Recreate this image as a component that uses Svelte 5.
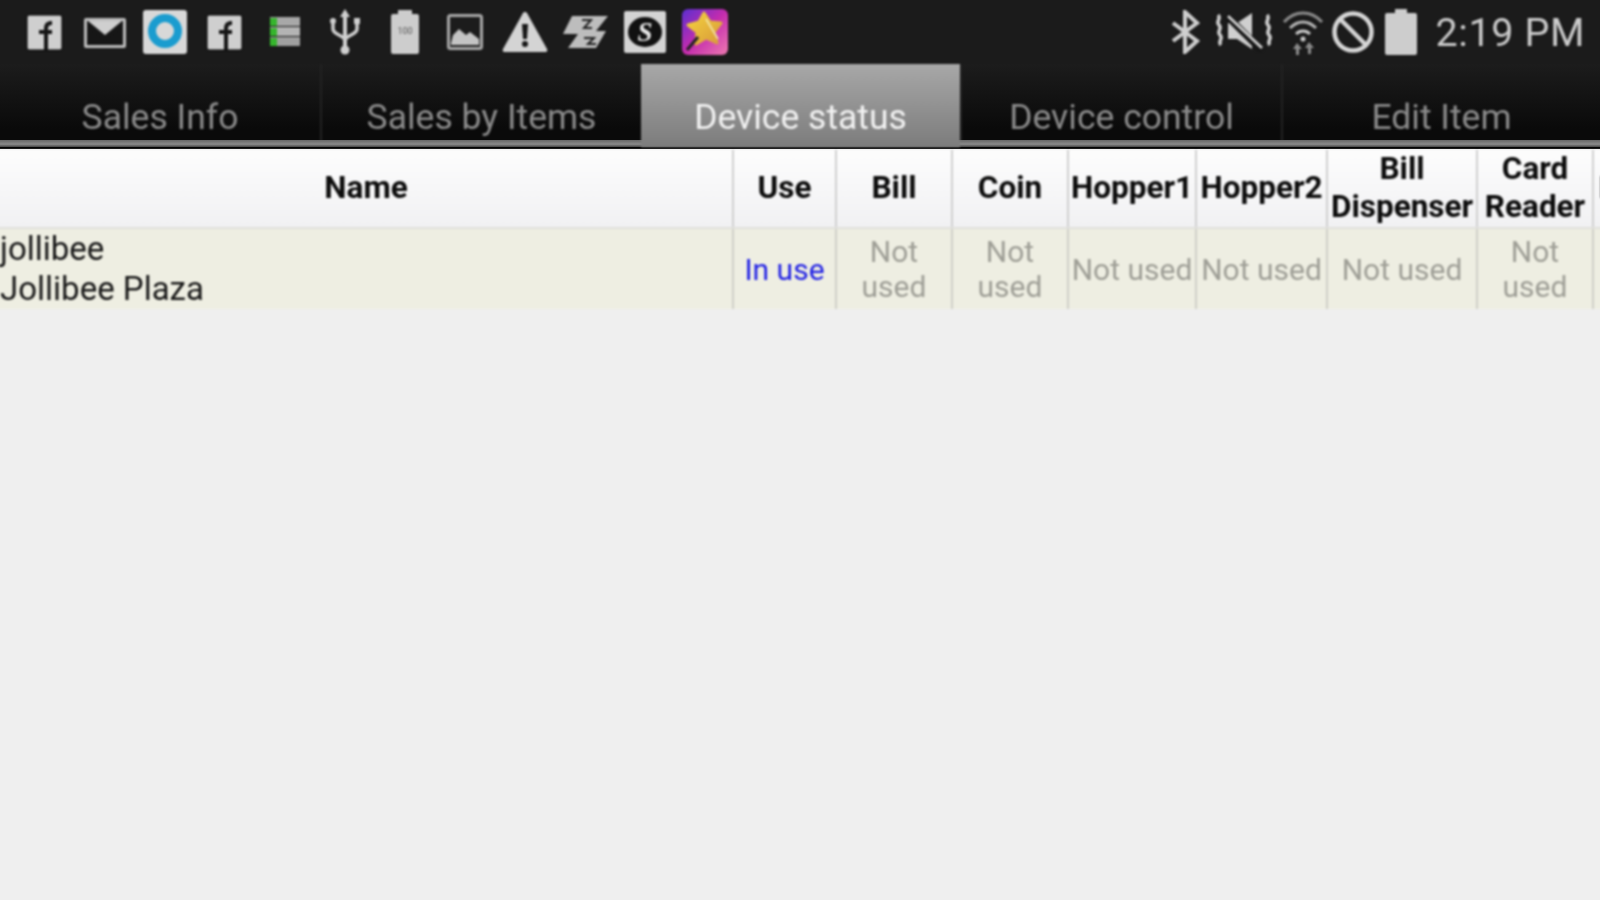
<script>
    const tabs = ["Sales Info", "Sales by Items", "Device status", "Device control", "Edit Item"];
    const active = 2;

    const columns = [
        { label: ["Name"], width: 737 },
        { label: ["Use"], width: 103 },
        { label: ["Bill"], width: 116 },
        { label: ["Coin"], width: 116 },
        { label: ["Hopper1"], width: 128 },
        { label: ["Hopper2"], width: 131 },
        { label: ["Bill", "Dispenser"], width: 150 },
        { label: ["Card", "Reader"], width: 116 },
        { label: ["Error"], width: 80 },
    ];

    const cells = [
        { lines: ["Not", "used"] },
        { lines: ["Not", "used"] },
        { lines: ["Not used"] },
        { lines: ["Not used"] },
        { lines: ["Not used"] },
        { lines: ["Not", "used"] },
    ];
</script>

<div class="screen">
    <header class="status">
        <div class="icons">
            <span class="slot">
                <svg width="40" height="40" viewBox="0 0 40 40">
                    <rect x="2" y="3" width="35" height="35" rx="2" fill="#cfcfcf" stroke="#000" stroke-width="1" />
                    <path d="M19 38V17c0-6 3-8 8-8v4c-3 0-4 1-4 5h4v4h-4v16z" fill="#161616" />
                    <path d="M14 18h13v4H14z" fill="#161616" />
                </svg>
            </span>
            <span class="slot">
                <svg width="44" height="40" viewBox="0 0 44 40">
                    <rect x="1" y="6" width="42" height="30" rx="2" fill="#bcbcbc" />
                    <path d="M4 9h36v24H4z" fill="#161616" />
                    <path d="M5 9h34L22 23z" fill="#cfcfcf" />
                    <path d="M8 29V19l14 10 14-10v10z" fill="#161616" />
                </svg>
            </span>
            <span class="slot">
                <svg width="46" height="46" viewBox="0 0 46 46">
                    <rect x="1" y="1" width="44" height="44" rx="3" fill="#d8d8d8" />
                    <circle cx="23" cy="22" r="13" fill="none" stroke="#1a9ccf" stroke-width="8" />
                </svg>
            </span>
            <span class="slot">
                <svg width="40" height="40" viewBox="0 0 40 40">
                    <rect x="2" y="3" width="35" height="35" rx="2" fill="#cfcfcf" stroke="#000" stroke-width="1" />
                    <path d="M19 38V17c0-6 3-8 8-8v4c-3 0-4 1-4 5h4v4h-4v16z" fill="#161616" />
                    <path d="M14 18h13v4H14z" fill="#161616" />
                </svg>
            </span>
            <span class="slot">
                <svg width="32" height="32" viewBox="0 0 32 32">
                    <rect x="1" y="1" width="30" height="9" fill="#a8a8a8" />
                    <rect x="1" y="11" width="30" height="9" fill="#b4b4b4" />
                    <rect x="1" y="21" width="30" height="9" fill="#a0a0a0" />
                    <rect x="1" y="2" width="7" height="8" fill="#35b52c" />
                    <rect x="1" y="12" width="7" height="8" fill="#35b52c" />
                    <rect x="1" y="22" width="7" height="8" fill="#35b52c" />
                </svg>
            </span>
            <span class="slot">
                <svg width="32" height="48" viewBox="0 0 32 48" fill="none" stroke="#d0d0d0">
                    <path d="M16 4v36" stroke-width="4" />
                    <path d="M16 1l5 8H11z" fill="#d0d0d0" stroke="none" />
                    <path d="M4 14v7c0 6 12 6 12 12" stroke-width="3.5" />
                    <path d="M28 14v7c0 6-12 6-12 12" stroke-width="3.5" />
                    <circle cx="4" cy="13" r="3" fill="#d0d0d0" stroke="none" />
                    <rect x="25" y="10" width="6" height="6" fill="#d0d0d0" stroke="none" />
                    <circle cx="16" cy="42" r="4.5" fill="#d0d0d0" stroke="none" />
                </svg>
            </span>
            <span class="slot">
                <svg width="32" height="46" viewBox="0 0 32 46">
                    <path d="M9 1h14v4h5a2 2 0 0 1 2 2v36a2 2 0 0 1-2 2H4a2 2 0 0 1-2-2V7a2 2 0 0 1 2-2h5z" fill="#cdcdcd" />
                    <text x="16" y="25" class="tiny">100</text>
                </svg>
            </span>
            <span class="slot">
                <svg width="36" height="38" viewBox="0 0 36 38">
                    <rect x="1.5" y="2.5" width="33" height="33" rx="2" fill="#1c1c1c" stroke="#a8a8a8" stroke-width="3" />
                    <path d="M4 30l2-8 6-6 7 6 4-3 9 7v6H4z" fill="#c4c4c4" />
                </svg>
            </span>
            <span class="slot">
                <svg width="46" height="42" viewBox="0 0 46 42">
                    <path d="M23 1a2 2 0 0 1 2 1l20 36a2 2 0 0 1-2 3H3a2 2 0 0 1-2-3L21 2a2 2 0 0 1 2-1z" fill="#d4d4d4" />
                    <path d="M20 13h6l-1 15h-4z" fill="#161616" />
                    <circle cx="23" cy="33" r="3" fill="#161616" />
                </svg>
            </span>
            <span class="slot">
                <svg width="46" height="36" viewBox="0 0 46 36">
                    <path d="M10 2h36l-12 15h10L34 34H6l10-14H1z" fill="#bdbdbd" />
                    <path d="M20 6h9l-7 8h8" fill="none" stroke="#222" stroke-width="2" />
                    <path d="M22 24h10l-6 6h8" fill="none" stroke="#222" stroke-width="2" />
                </svg>
            </span>
            <span class="slot">
                <svg width="44" height="44" viewBox="0 0 44 44">
                    <rect x="1" y="1" width="42" height="42" rx="2" fill="#d4d4d4" />
                    <ellipse cx="22" cy="22" rx="17" ry="15" fill="#111" />
                    <text x="22" y="31" class="badge-s">S</text>
                </svg>
            </span>
            <span class="slot">
                <svg width="46" height="46" viewBox="0 0 46 46">
                    <defs>
                        <linearGradient id="wand-bg" x1="0" y1="0" x2="1" y2="1">
                            <stop offset="0" stop-color="#5a2fd0" />
                            <stop offset="0.5" stop-color="#c42cae" />
                            <stop offset="1" stop-color="#ee7ab0" />
                        </linearGradient>
                        <linearGradient id="wand-star" x1="0" y1="0" x2="1" y2="1">
                            <stop offset="0" stop-color="#f4d23e" />
                            <stop offset="1" stop-color="#d89a3a" />
                        </linearGradient>
                    </defs>
                    <rect width="46" height="46" rx="6" fill="url(#wand-bg)" />
                    <path d="M22 4l6 9 11 1-7 9 3 11-11-5-10 6 1-12-9-7 11-3z" fill="url(#wand-star)" stroke="url(#wand-star)" stroke-width="3" stroke-linejoin="round" />
                    <path d="M5 41l11-13" stroke="#222" stroke-width="3" />
                    <path d="M24 10l12 20" stroke="#f4e9b0" stroke-width="1.5" />
                </svg>
            </span>
        </div>

        <div class="system">
            <svg class="bt" width="30" height="44" viewBox="0 0 30 44" fill="none" stroke="#cfcfcf" stroke-width="4">
                <path d="M3 13l24 18-12 11V2l12 11L3 31" />
            </svg>
            <svg class="mute" width="60" height="40" viewBox="0 0 60 40" fill="none" stroke="#cfcfcf">
                <path d="M4 3c4 4-3 6 1 10s-3 6 1 10-3 6 1 10" stroke-width="3.5" />
                <path d="M53 3c4 4-3 6 1 10s-3 6 1 10-3 6 1 10" stroke-width="3.5" />
                <path d="M14 11h9L38 1v36L23 27h-9z" fill="#cfcfcf" stroke="none" />
                <path d="M12 3l36 36" stroke="#161616" stroke-width="7" />
                <path d="M14 4l34 32" stroke-width="3" />
            </svg>
            <svg class="wifi" width="42" height="46" viewBox="0 0 42 46" fill="none" stroke="#b4b4b4" stroke-width="3">
                <path d="M2 13c11-12 27-12 38 0" stroke="#8a8a8a" />
                <path d="M8 19c8-8 18-8 26 0" />
                <path d="M14 25c4-4 10-4 14 0" stroke="#c8c8c8" />
                <circle cx="21" cy="30" r="2.5" fill="#c8c8c8" stroke="none" />
                <path d="M15 34l-4 6h3v6h3v-6h3z" fill="#8c8c8c" stroke="none" />
                <path d="M27 45l4-6h-3v-6h-3v6h-3z" fill="#8c8c8c" stroke="none" transform="rotate(180 27 39)" />
            </svg>
            <svg class="block" width="42" height="42" viewBox="0 0 42 42" fill="none" stroke="#d6d6d6" stroke-width="4.5">
                <circle cx="21" cy="21" r="18.5" />
                <path d="M8 8l26 26" />
            </svg>
            <svg class="battery" width="32" height="46" viewBox="0 0 32 46">
                <path d="M10 0h12v4h8a2 2 0 0 1 2 2v38a2 2 0 0 1-2 2H2a2 2 0 0 1-2-2V6a2 2 0 0 1 2-2h8z" fill="#cdcdcd" />
            </svg>
            <span class="time">2:19 PM</span>
        </div>
    </header>

    <nav class="tabs">
        {#each tabs as tab, i}
            <div class="tab" class:active={i === active}>{tab}</div>
        {/each}
    </nav>

    <table>
        <colgroup>
            {#each columns as col}
                <col style="width: {col.width}px" />
            {/each}
        </colgroup>
        <thead>
            <tr>
                {#each columns as col}
                    <th>
                        {#each col.label as line}<div>{line}</div>{/each}
                    </th>
                {/each}
            </tr>
        </thead>
        <tbody>
            <tr>
                <td class="name"><div>jollibee</div><div>Jollibee Plaza</div></td>
                <td class="use">In use</td>
                {#each cells as cell}
                    <td class="muted">
                        {#each cell.lines as line}<div>{line}</div>{/each}
                    </td>
                {/each}
                <td></td>
            </tr>
        </tbody>
    </table>
</div>

<style>
    :global(body) {
        background: #efefef;
        overflow: hidden;
    }

    .screen {
        width: 1600px;
        height: 900px;
        overflow: hidden;
        background: #efefef;
        font-family: Roboto, "Noto Sans", sans-serif;
    }

    .status {
        height: 64px;
        background: #1b1b1b;
        display: flex;
        align-items: center;
        justify-content: space-between;
        padding: 0 15px;
    }

    .icons,
    .system,
    .tab,
    table {
        filter: blur(0.85px);
    }

    .icons {
        display: flex;
    }

    .slot {
        width: 60px;
        height: 64px;
        display: flex;
        align-items: center;
        justify-content: center;
    }

    .system {
        display: flex;
        align-items: center;
        gap: 11px;
    }

    .tiny {
        font-size: 9px;
        fill: #555;
        text-anchor: middle;
    }

    .badge-s {
        font-family: "Liberation Serif", serif;
        font-size: 27px;
        font-weight: bold;
        font-style: italic;
        fill: #e8e8e8;
        text-anchor: middle;
    }

    .bt {
        margin-right: 3px;
    }

    .wifi {
        margin: 0 -3px;
    }

    .time {
        font-size: 39.5px;
        color: #cbcbcb;
        margin-left: 7px;
        letter-spacing: 0.6px;
    }

    .tabs {
        height: 81px;
        display: grid;
        grid-template-columns: 320px 321px 319px 321px 319px;
        background: linear-gradient(#1c1c1c, #0a0a0a 80%);
        border-bottom: 4px solid #050505;
        position: relative;
    }

    .tabs::after {
        content: "";
        position: absolute;
        left: 0;
        right: 0;
        bottom: -2px;
        height: 7px;
        background: linear-gradient(#666, #8a8a8a 60%, #444);
    }

    .tab {
        display: flex;
        align-items: flex-end;
        justify-content: center;
        padding-bottom: 7px;
        font-size: 35.5px;
        color: #8b8b8b;
        border-left: 2px solid #232323;
    }

    .tab:first-child {
        border-left: 0;
    }

    .tab.active {
        background: linear-gradient(#a8a8a8, #7c7c7c);
        color: #f2f2f2;
        border-left: 0;
        position: relative;
        z-index: 1;
        margin-bottom: -2px;
        padding-bottom: 9px;
    }

    table {
        table-layout: fixed;
        border-collapse: collapse;
        width: 1677px;
        margin: 1px 0 0 -4px;
    }

    th {
        height: 76px;
        padding: 0 0 1px;
        font-size: 31.5px;
        font-weight: bold;
        line-height: 38px;
        color: #0c0c0c;
        text-align: center;
        background: linear-gradient(#fdfdfd, #f1f1f3);
        border-left: 2px solid #d0d0d0;
        border-bottom: 2px solid #e0e0dc;
        white-space: nowrap;
        overflow: hidden;
    }

    th:first-child,
    td:first-child {
        border-left: 0;
    }

    td {
        height: 78px;
        padding: 0;
        background: #eeeee2;
        border-left: 2px solid #d0d0c8;
        text-align: center;
        font-size: 30px;
        line-height: 35px;
        white-space: nowrap;
    }

    th:first-child {
        padding-left: 4px;
    }

    .name {
        text-align: left;
        padding-left: 4px;
        font-size: 33px;
        line-height: 40px;
        color: #181818;
    }

    .use {
        color: #2020e4;
    }

    .muted {
        color: #9e9e96;
    }
</style>
